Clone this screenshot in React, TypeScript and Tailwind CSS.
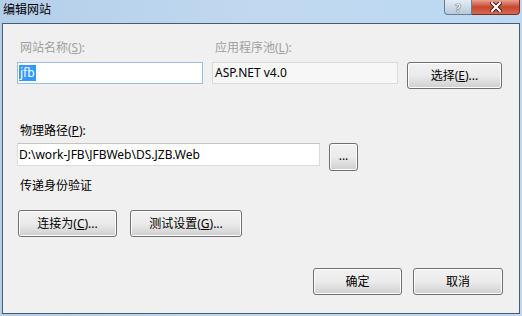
const btn =
  "flex items-center justify-center rounded-[3px] border border-[#707070] bg-gradient-to-b from-[#f2f2f2] via-[#ebebeb] via-50% to-[#cfcfcf] shadow-[inset_0_0_0_1px_#fcfcfc] text-[12px] text-black";

const Button = ({ label, className = "" }: { label: React.ReactNode; className?: string }) => (
  <div className={`${btn} ${className}`}>{label}</div>
);

export default function App() {
  return (
    <div className="relative flex h-[316px] w-[522px] flex-col overflow-hidden bg-gradient-to-r from-[#b4cfea] via-[#c0d9f0] to-[#bcd8f3] font-['Noto_Sans','Noto_Sans_CJK_SC',sans-serif] text-[12px] leading-[16px]">
      {/* title bar */}
      <div className="flex h-[23px] items-start justify-between">
        <div className="pl-[3px] pt-[2px] text-[12px] text-black">编辑网站</div>
        <div className="flex pr-[2px]">
          <div className="flex h-[15px] w-[28px] items-center justify-center rounded-bl-[4px] border border-t-0 border-[#6b7d90] bg-gradient-to-b from-[#e4edf6] to-[#b8cadb] text-[11px] font-bold leading-none text-[#f4f6f8] [text-shadow:0_0_1px_#2e3b48,0_0_1px_#2e3b48]">
            ?
          </div>
          <div className="flex h-[15px] w-[48px] items-center justify-center rounded-br-[4px] border border-l-0 border-t-0 border-[#7a2c22] bg-gradient-to-b from-[#e8a090] via-[#c7452f] to-[#d26a4e]">
            <svg width="12" height="10" viewBox="0 0 12 10">
              <path d="M2 1 L10 9 M10 1 L2 9" stroke="#3a0d08" strokeWidth="4" strokeLinecap="square" />
              <path d="M2 1 L10 9 M10 1 L2 9" stroke="#ffffff" strokeWidth="2.2" strokeLinecap="square" />
            </svg>
          </div>
        </div>
      </div>

      {/* client area */}
      <div className="mx-[2px] mb-[2px] flex flex-1 flex-col border border-[#4e5a68] bg-[#f0f0f0] pl-[14px] pt-[16px]">
        <div className="flex gap-[9px]">
          <div className="flex w-[186px] flex-col">
            <div className="pl-[3px] text-[#a0a0a0]">
              网站名称(<span className="underline">S</span>):
            </div>
            <div className="mt-[6px] flex h-[22px] items-center border border-[#9ebfdc] bg-white pl-[1px]">
              <span className="bg-[#3399ff] px-[1px] text-white">jfb</span>
            </div>
          </div>
          <div className="flex w-[186px] flex-col">
            <div className="pl-[3px] text-[#a0a0a0]">
              应用程序池(<span className="underline">L</span>):
            </div>
            <div className="mt-[6px] flex h-[22px] items-center border border-[#dadada] bg-[#f7f7f7] pl-[2px] text-black">
              ASP.NET v4.0
            </div>
          </div>
          <div className="flex flex-col pt-[22px]">
            <Button
              className="h-[27px] w-[95px]"
              label={
                <>
                  选择(<span className="underline">E</span>)...
                </>
              }
            />
          </div>
        </div>

        <div className="mt-[34px] pl-[3px] text-black">
          物理路径(<span className="underline">P</span>):
        </div>
        <div className="mt-[4px] flex items-start gap-[9px]">
          <div className="flex h-[23px] w-[303px] items-center border border-[#dcdcdc] border-t-[#c4c4c4] bg-white pl-[1px] text-black">
            D:\work-JFB\JFBWeb\DS.JZB.Web
          </div>
          <Button className="h-[28px] w-[29px] items-center pb-[2px] leading-none" label="..." />
        </div>

        <div className="mt-[7px] pl-[3px] text-black">传递身份验证</div>

        <div className="mt-[16px] flex gap-[13px] pl-[1px]">
          <Button
            className="h-[27px] w-[99px]"
            label={
              <>
                连接为(<span className="underline">C</span>)...
              </>
            }
          />
          <Button
            className="h-[27px] w-[112px]"
            label={
              <>
                测试设置(<span className="underline">G</span>)...
              </>
            }
          />
        </div>

        <div className="mt-[31px] flex justify-end gap-[11px] pr-[16px]">
          <Button
            className="h-[27px] w-[89px] border-[#3c7fb1] shadow-[inset_0_0_0_1px_#8fd2f5]"
            label="确定"
          />
          <Button className="h-[27px] w-[90px]" label="取消" />
        </div>
      </div>
    </div>
  );
}
